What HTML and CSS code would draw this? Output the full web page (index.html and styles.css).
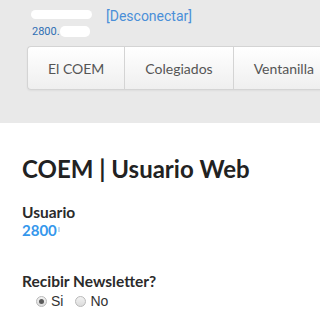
FILE: index.html
```html
<!DOCTYPE html>
<html lang="es">
<head>
<meta charset="utf-8">
<link rel="stylesheet" href="styles.css">
</head>
<body>
<header class="top">
  <div class="user">
    <div class="user-left">
      <span class="blob blob-name"></span>
      <span class="user-id">2800.<span class="blob blob-id"></span></span>
    </div>
    <a class="logout" href="#">[Desconectar]</a>
  </div>
  <nav class="nav">
    <a class="nav-item" href="#">El COEM</a>
    <a class="nav-item" href="#">Colegiados</a>
    <a class="nav-item" href="#">Ventanilla</a>
  </nav>
</header>
<main class="content">
  <h1 class="title">COEM | Usuario Web</h1>
  <div class="field">
    <div class="label">Usuario</div>
    <div class="value">2800<span class="tick"></span></div>
  </div>
  <div class="field news">
    <div class="label">Recibir Newsletter?</div>
    <div class="radios">
      <label class="radio"><input type="radio" name="nl" checked>Si</label>
      <label class="radio"><input type="radio" name="nl">No</label>
    </div>
  </div>
</main>
</body>
</html>
```
FILE: styles.css
```css
html, body {
  margin: 0;
  padding: 0;
  background: #ffffff;
  font-family: Lato, "Liberation Sans", sans-serif;
  width: 320px;
  overflow: hidden;
}
.top {
  background: #e9e9e9;
  height: 123px;
  box-sizing: border-box;
  padding-top: 7px;
  overflow: hidden;
}
.user {
  display: flex;
  align-items: flex-start;
  padding-left: 31px;
}
.user-left {
  display: flex;
  flex-direction: column;
  width: 75px;
}
.blob {
  display: inline-block;
  background: #ffffff;
  border-radius: 5px;
}
.blob-name {
  width: 61px;
  height: 9px;
  margin-top: 3px;
}
.user-id {
  font-family: Roboto, "Liberation Sans", sans-serif;
  font-size: 11px;
  color: #2f6fb4;
  line-height: 12px;
  margin-top: 7px;
  margin-left: 1px;
  display: flex;
  align-items: center;
}
.blob-id {
  width: 30px;
  height: 11px;
  border-radius: 5px;
  margin-top: -2px;
}
.logout {
  font-family: Roboto, "Liberation Sans", sans-serif;
  font-size: 14px;
  line-height: 16px;
  color: #4a8fd8;
  text-decoration: none;
  margin-top: 1px;
}
.nav {
  display: flex;
  margin-top: 8px;
  margin-left: 27px;
  width: 340px;
  height: 42px;
  border: 1px solid #d4d4d4;
  border-right: none;
  border-radius: 4px 0 0 4px;
  background: linear-gradient(#ffffff, #efefef);
  box-shadow: 0 1px 2px rgba(0,0,0,0.05);
  white-space: nowrap;
}
.nav-item {
  flex-shrink: 0;
  display: flex;
  align-items: center;
  padding: 0 20px;
  font-size: 14px;
  color: #555555;
  text-decoration: none;
  border-right: 1px solid #d4d4d4;
}
.nav-item:last-child {
  border-right: none;
}
.content {
  padding: 31px 22px 0;
}
.title {
  margin: 0;
  font-size: 24px;
  font-weight: 700;
  color: #222222;
  line-height: 30px;
}
.field {
  margin-top: 19px;
}
.label {
  font-size: 15.5px;
  font-weight: 700;
  color: #2b2b2b;
  line-height: 18px;
}
.value {
  font-size: 15px;
  font-weight: 700;
  color: #3597ec;
  line-height: 18px;
  display: flex;
  align-items: center;
}
.tick {
  display: inline-block;
  width: 2px;
  height: 5px;
  background: #c6dcf3;
  margin-left: 1px;
  margin-top: -2px;
}
.news {
  margin-top: 33px;
}
.radios {
  display: flex;
  gap: 12px;
  margin-top: 4px;
  padding-left: 14px;
}
.radio {
  font-family: "Liberation Sans", Arial, sans-serif;
  font-size: 14px;
  color: #333333;
  display: flex;
  align-items: center;
  line-height: 14px;
}
.radio input {
  -webkit-appearance: none;
  appearance: none;
  margin: 0 4px 0 0;
  width: 11px;
  height: 11px;
  border-radius: 50%;
  border: 1px solid #b9b9b9;
  background: linear-gradient(#f2f2f2, #dcdcdc);
  box-sizing: border-box;
  display: inline-flex;
  align-items: center;
  justify-content: center;
}
.radio input:checked::after {
  content: "";
  width: 5px;
  height: 5px;
  border-radius: 50%;
  background: #5a5a5a;
}
```
